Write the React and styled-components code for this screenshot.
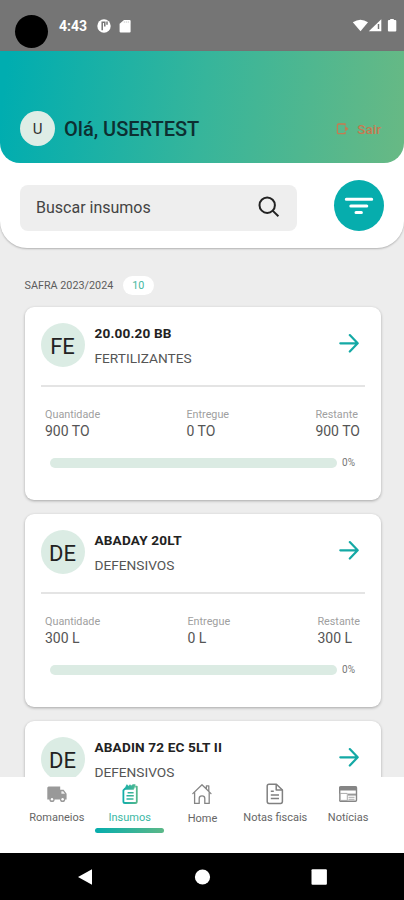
import React from 'react'
import styled, { createGlobalStyle } from 'styled-components'

const cards = [
    { initials: 'FE', name: '20.00.20 BB', category: 'FERTILIZANTES', stock: { unit: 'TO', total: 900, delivered: 0 } },
    { initials: 'DE', name: 'ABADAY 20LT', category: 'DEFENSIVOS', stock: { unit: 'L', total: 300, delivered: 0 } },
    { initials: 'DE', name: 'ABADIN 72 EC 5LT II', category: 'DEFENSIVOS' },
]

const tabs = [
    { label: 'Romaneios', icon: <TruckIcon /> },
    { label: 'Insumos', icon: <SuppliesIcon />, active: true },
    { label: 'Home', icon: <HomeIcon /> },
    { label: 'Notas fiscais', icon: <InvoiceIcon /> },
    { label: 'Notícias', icon: <NewsIcon /> },
]

function App() {
    return (
        <Screen>
            <GlobalStyle />
            <StatusBar>
                <Camera />
                <Clock>4:43</Clock>
                <StatusLeft />
                <StatusRight />
            </StatusBar>

            <TopPanel>
                <Header>
                    <UserAvatar>U</UserAvatar>
                    <Greeting>Olá, USERTEST</Greeting>
                    <LogoutButton>
                        <LogoutIcon />
                        Sair
                    </LogoutButton>
                </Header>
                <SearchRow>
                    <SearchField>
                        <span>Buscar insumos</span>
                        <SearchIcon />
                    </SearchField>
                    <FilterButton>
                        <FilterIcon />
                    </FilterButton>
                </SearchRow>
            </TopPanel>

            <Content>
                <SectionTitle>
                    <span>SAFRA 2023/2024</span>
                    <Count>10</Count>
                </SectionTitle>
                {cards.map((card) => (
                    <SupplyCard key={card.name} {...card} />
                ))}
            </Content>

            <TabBar>
                {tabs.map((tab) => (
                    <Tab key={tab.label} $active={tab.active}>
                        <TabIcon>{tab.icon}</TabIcon>
                        <TabLabel $low={tab.label === 'Home'}>{tab.label}</TabLabel>
                        {tab.active && <TabLine />}
                    </Tab>
                ))}
            </TabBar>

            <SystemBar>
                <svg width="48" height="20" viewBox="0 0 48 20">
                    <path d="M31 2.2v15.6L17 10z" fill="#fff" />
                </svg>
                <svg width="48" height="20" viewBox="0 0 48 20">
                    <circle cx="24.5" cy="10" r="7.6" fill="#fff" />
                </svg>
                <svg width="48" height="20" viewBox="0 0 48 20">
                    <rect x="16.5" y="2.3" width="15.4" height="15.4" rx="1" fill="#fff" />
                </svg>
            </SystemBar>
        </Screen>
    )
}

export default App

function SupplyCard({ initials, name, category, stock }) {
    return (
        <Card>
            <CardHead>
                <CardAvatar>{initials}</CardAvatar>
                <CardTitle>
                    <Name>{name}</Name>
                    <Category>{category}</Category>
                </CardTitle>
                <ArrowIcon />
            </CardHead>
            {stock && <Stock {...stock} />}
        </Card>
    )
}

function Stock({ unit, total, delivered }) {
    const percent = Math.round((delivered / total) * 100)

    return (
        <>
            <Stats>
                <Stat>
                    <dt>Quantidade</dt>
                    <dd>{total} {unit}</dd>
                </Stat>
                <Stat>
                    <dt>Entregue</dt>
                    <dd>{delivered} {unit}</dd>
                </Stat>
                <Stat>
                    <dt>Restante</dt>
                    <dd>{total - delivered} {unit}</dd>
                </Stat>
            </Stats>
            <ProgressRow>
                <Track>
                    <Fill style={{ width: `${percent}%` }} />
                </Track>
                <span>{percent}%</span>
            </ProgressRow>
        </>
    )
}

function StatusLeft() {
    return (
        <svg width="36" height="16" viewBox="0 0 36 16">
            <circle cx="7" cy="8" r="6.7" fill="#fff" />
            <path d="M5.2 12.3V4.2h2.6v4.4M10 3.6v3.2" fill="none" stroke="#757575" strokeWidth="1.5" />
            <path d="M27 2H32.6a1 1 0 0 1 1 1v10.4a1 1 0 0 1-1 1h-9a1 1 0 0 1-1-1V5.8z" fill="#fff" />
            <path d="M27.3 3.4v1.3M29.3 3.4v1.3M31.3 3.4v1.3" stroke="#bbb" strokeWidth="0.8" />
        </svg>
    )
}

function StatusRight() {
    return (
        <StatusIcons width="46" height="16" viewBox="0 0 46 16">
            <path d="M0.8 4.3Q8.5 -0.8 16 4.3L8.5 13.3z" fill="#fff" />
            <path d="M29.3 1.3V13.3H16.8z" fill="#fff" />
            <path d="M26.5 6v5" stroke="#757575" strokeWidth="1.5" />
            <path d="M38.2 1h3.6v1h1.5a1 1 0 0 1 1 1v9.4a1 1 0 0 1-1 1h-6.4a1 1 0 0 1-1-1V3a1 1 0 0 1 1-1h1.3z" fill="#fff" />
        </StatusIcons>
    )
}

function LogoutIcon() {
    return (
        <svg width="14" height="14" viewBox="0 0 14 14" fill="none" stroke="#c77a50" strokeWidth="1.3">
            <path d="M9 3.6V2H2.6Q1.4 2 1.4 3.2v7.2q0 1.2 1.2 1.2H9V10" />
            <path d="M9.2 4.6 12.2 6.8 9.2 9z" fill="#c77a50" strokeWidth="0.6" />
        </svg>
    )
}

function SearchIcon() {
    return (
        <svg width="22" height="22" viewBox="0 0 22 22" fill="none" stroke="#222" strokeWidth="2">
            <circle cx="9.2" cy="9.2" r="7.7" />
            <path d="m14.6 14.6 5.8 5.6" />
        </svg>
    )
}

function FilterIcon() {
    return (
        <svg width="30" height="20" viewBox="0 0 30 20" stroke="#fff" strokeWidth="3" strokeLinecap="round">
            <path d="M2.3 3.3h25.4M6.8 10h16M12 16.4h5.4" />
        </svg>
    )
}

function ArrowIcon() {
    return (
        <svg width="20" height="20" viewBox="0 0 20 20" fill="none" stroke="#14a9a5" strokeWidth="2.2" strokeLinecap="round" strokeLinejoin="round">
            <path d="M1.3 10.3h17M10.8 2.1 18.7 10.3l-7.9 8.2" />
        </svg>
    )
}

function TruckIcon() {
    return (
        <svg width="22" height="20" viewBox="0 0 22 20">
            <path d="M2.5 2.6h11.7v3.2h3.4l3 4v5.6h-1.4a2.6 2.6 0 0 1-5.2 0H8.6a2.6 2.6 0 0 1-5.2 0H1.3V3.6z" fill="#999" />
            <path d="M15.4 7.2h1.7l1.9 2.5h-3.6z" fill="#eee" />
            <circle cx="6" cy="15.2" r="1.2" fill="#fff" />
            <circle cx="16.6" cy="15.2" r="1.2" fill="#fff" />
        </svg>
    )
}

function SuppliesIcon() {
    return (
        <svg width="22" height="22" viewBox="0 0 22 22" fill="none" stroke="url(#supplies)" strokeWidth="1.8" strokeLinejoin="round">
            <defs>
                <linearGradient id="supplies" gradientUnits="userSpaceOnUse" x1="4" y1="0" x2="19" y2="0">
                    <stop offset="0" stopColor="#0fadaa" />
                    <stop offset="1" stopColor="#5cb98b" />
                </linearGradient>
            </defs>
            <path d="M6.6 5 4.4 7.4v11q0 1.6 1.6 1.6h10.2q1.6 0 1.6-1.6V3.6h-1.6" />
            <path d="M5.8 6.3 7.8 1.7l1.8 1.6 1.4-1.6 1 1.6 1.6-1.6h2.6L14.6 6.3z" fill="url(#supplies)" strokeWidth="0.8" />
            <path d="M8.6 9.7h6M7.5 12.8h7.3M7.5 16h7" strokeWidth="1.6" />
        </svg>
    )
}

function HomeIcon() {
    return (
        <svg width="22" height="22" viewBox="0 0 22 22" fill="none" stroke="#858585" strokeWidth="1.3" strokeLinejoin="round" strokeLinecap="round">
            <path d="M1.8 10.6 11 1.8l9 8.8M15.4 5.5V2.8h2.4v5.4" />
            <path d="M3.6 9.6v10.8h4.6v-5q0-2.6 2.8-2.6t2.8 2.6v5h4.4V9.6" />
        </svg>
    )
}

function InvoiceIcon() {
    return (
        <svg width="22" height="22" viewBox="0 0 22 22" fill="none" stroke="#808080" strokeWidth="1.5" strokeLinejoin="round">
            <path d="M5 1.2h7.4l6 5.8v11.6q0 1.8-1.8 1.8H5q-1.8 0-1.8-1.8V3Q3.2 1.2 5 1.2z" />
            <path d="M12.2 1.2v5.8h6.2M6.8 8.2h3M6.8 12h8.2M6.8 15.6h8.2" />
        </svg>
    )
}

function NewsIcon() {
    return (
        <svg width="20" height="20" viewBox="0 0 20 20">
            <rect x="1.7" y="2.7" width="16.8" height="14.6" rx="1" fill="none" stroke="#858585" strokeWidth="1.4" />
            <path d="M1.5 2.7h17v3.8h-17z" fill="#858585" />
            <path d="M2 9.4h7.3v7H2z" fill="none" stroke="#aaa" />
            <path d="M10 10.6h8" stroke="#999" strokeWidth="2" />
            <path d="M10.5 13.3h6M10.5 15.3h6" stroke="#aaa" strokeWidth="1" />
        </svg>
    )
}

const GlobalStyle = createGlobalStyle`
    * {
        box-sizing: border-box;
    }
    body {
        margin: 0;
        font-family: Roboto, "Liberation Sans", sans-serif;
    }
    svg {
        display: block;
        flex: none;
    }
`

const Screen = styled.div`
    width: 404px;
    height: 900px;
    display: flex;
    flex-direction: column;
    overflow: hidden;
    background: #ededed;
`

const StatusBar = styled.div`
    flex: none;
    height: 51px;
    display: flex;
    align-items: center;
    padding: 1px 5px 0 15px;
    background: #757575;
`

const Camera = styled.div`
    width: 33px;
    height: 33px;
    margin-top: 11px;
    border-radius: 50%;
    background: #000;
`

const Clock = styled.div`
    width: 38px;
    margin-left: 11px;
    color: #fff;
    font-size: 14px;
    font-weight: 700;
`

const StatusIcons = styled.svg`
    margin-left: auto;
    margin-right: 1px;
`

const TopPanel = styled.div`
    flex: none;
    height: 197px;
    border-radius: 0 0 27px 27px;
    background: #fff;
    box-shadow: 0 1px 2px rgba(0, 0, 0, 0.25);
`

const Header = styled.div`
    height: 112px;
    display: flex;
    align-items: center;
    padding: 43px 23px 0 20px;
    border-radius: 0 0 20px 20px;
    background: linear-gradient(97deg, #00adb0 2%, #36b59b 50%, #68b984 100%);
`

const UserAvatar = styled.div`
    width: 35px;
    height: 35px;
    display: flex;
    align-items: center;
    justify-content: center;
    border-radius: 50%;
    background: #deede6;
    color: #333;
    font-size: 15px;
`

const Greeting = styled.div`
    margin-left: 9px;
    color: #0d2f31;
    font-size: 20px;
    font-weight: 500;
    white-space: nowrap;
`

const LogoutButton = styled.div`
    display: flex;
    align-items: center;
    gap: 7px;
    margin-left: auto;
    color: #c77a50;
    font-size: 13.5px;
    font-weight: 500;
`

const SearchRow = styled.div`
    display: flex;
    align-items: center;
    justify-content: space-between;
    padding: 17px 20px 0;
`

const SearchField = styled.div`
    width: 277px;
    height: 46px;
    display: flex;
    align-items: center;
    justify-content: space-between;
    margin-top: 5px;
    padding: 0 17px 2px 16px;
    border-radius: 8px;
    background: #eee;
    color: #444;
    font-size: 16px;
`

const FilterButton = styled.div`
    width: 50px;
    height: 51px;
    display: flex;
    align-items: center;
    justify-content: center;
    border-radius: 50%;
    background: #06adad;
`

const Content = styled.div`
    flex: 1;
    min-height: 0;
    display: flex;
    flex-direction: column;
    gap: 14px;
    padding: 28px 23.5px 0 24.5px;
    overflow: hidden;
`

const SectionTitle = styled.div`
    flex: none;
    height: 19px;
    display: flex;
    align-items: center;
    margin-bottom: -2px;
    color: #5c5c5c;
    font-size: 10.8px;
`

const Count = styled.div`
    width: 31px;
    height: 19px;
    margin-left: 9.5px;
    border-radius: 10px;
    background: #fff;
    color: #45b8a0;
    line-height: 19px;
    text-align: center;
`

const Card = styled.div`
    flex: none;
    height: 193px;
    padding: 0 16px;
    border-radius: 9px;
    background: #fff;
    box-shadow: 0 1px 3px rgba(0, 0, 0, 0.3);
`

const CardHead = styled.div`
    height: 80px;
    display: flex;
    align-items: center;
    padding: 0 6px 7px 0;
    border-bottom: 2px solid #e4e4e4;
`

const CardAvatar = styled.div`
    width: 44px;
    height: 44px;
    margin-top: 4px;
    padding-top: 3px;
    border-radius: 50%;
    background: #dbece4;
    color: #222;
    font-size: 22px;
    line-height: 42px;
    text-align: center;
`

const CardTitle = styled.div`
    flex: 1;
    margin: 6px 0 0 10px;
    line-height: 25px;
    white-space: nowrap;
`

const Name = styled.div`
    color: #222;
    font-size: 13.6px;
    font-weight: 700;
    letter-spacing: 0.15px;
`

const Category = styled.div`
    color: #555;
    font-size: 13.7px;
`

const Stats = styled.dl`
    display: flex;
    justify-content: space-between;
    margin: 0;
    padding: 19px 4.5px 0;
`

const Stat = styled.div`
    dt {
        color: #a0a0a0;
        font-size: 10.8px;
        line-height: 17px;
    }
    dd {
        margin: 0;
        color: #555;
        font-size: 14px;
        line-height: 17px;
    }
`

const ProgressRow = styled.div`
    display: flex;
    align-items: center;
    gap: 5px;
    margin: 16px 0 0 9.5px;
    color: #777;
    font-size: 10px;
    line-height: 13px;
`

const Track = styled.div`
    width: 287px;
    height: 10px;
    border-radius: 5px;
    background: #dbebe3;
    overflow: hidden;
`

const Fill = styled.div`
    height: 100%;
    background: #06adad;
`

const TabBar = styled.div`
    flex: none;
    height: 76px;
    display: flex;
    justify-content: center;
    padding: 5px 0 0 1px;
    background: #fff;
`

const Tab = styled.div`
    width: 72.8px;
    display: flex;
    flex-direction: column;
    align-items: center;
    color: ${props => props.$active ? '#3bb8a4' : '#666'};
`

const TabIcon = styled.div`
    height: 23px;
    display: flex;
    align-items: center;
`

const TabLabel = styled.div`
    height: 23px;
    padding-top: ${props => props.$low ? 6 : 5}px;
    font-size: 11px;
    line-height: 15px;
    white-space: nowrap;
`

const TabLine = styled.div`
    width: 69px;
    height: 5px;
    border-radius: 3px;
    background: linear-gradient(90deg, #06adad, #5cb888);
`

const SystemBar = styled.div`
    flex: none;
    height: 47px;
    display: flex;
    align-items: center;
    justify-content: space-between;
    padding: 0 61px;
    background: #000;
`
